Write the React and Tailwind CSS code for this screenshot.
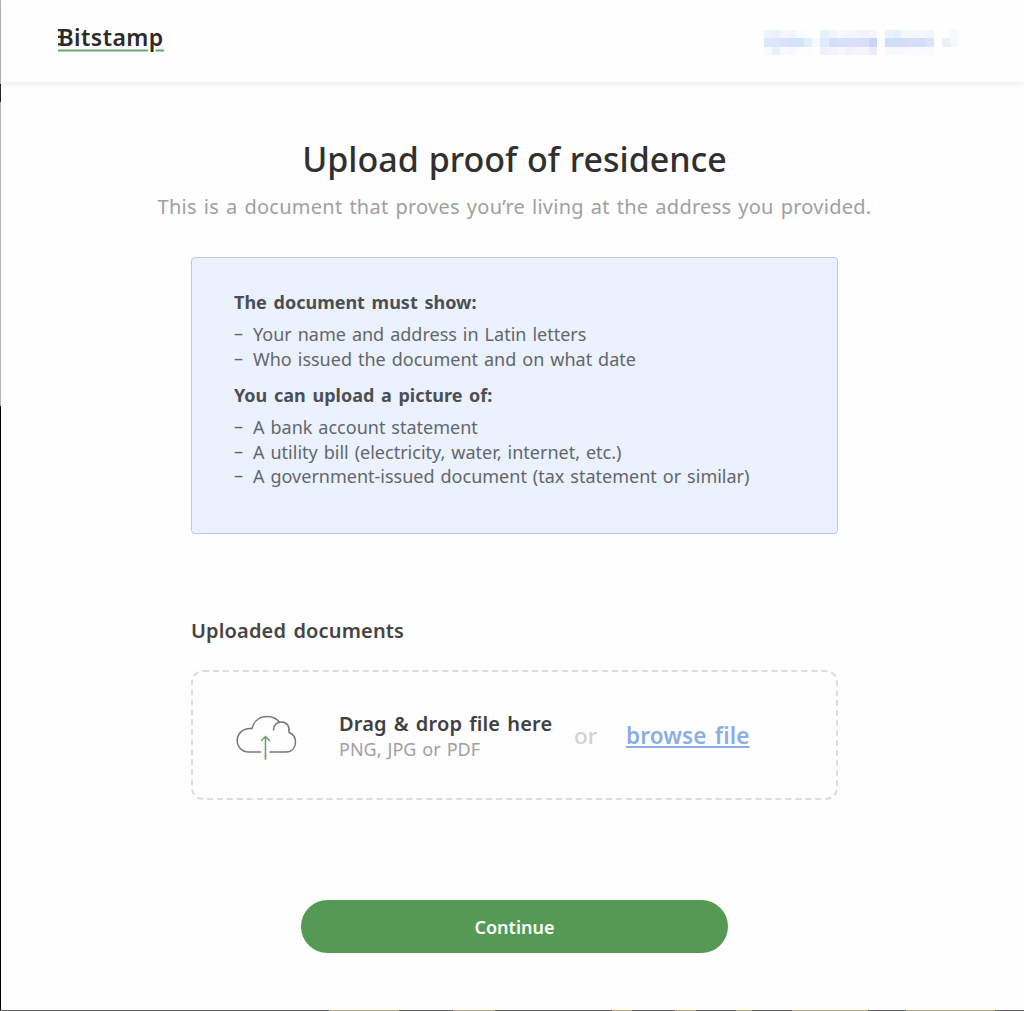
const sections = [
  {
    title: "The document must show:",
    items: [
      "Your name and address in Latin letters",
      "Who issued the document and on what date",
    ],
  },
  {
    title: "You can upload a picture of:",
    items: [
      "A bank account statement",
      "A utility bill (electricity, water, internet, etc.)",
      "A government-issued document (tax statement or similar)",
    ],
  },
];

// Pixelated account name, one colour per 8px cell
const maskedName = [
  ["#eef4fe", "#e9f1fd", "#f4f8fe", "#f1f6fe", "#f8fbff", "#fbfdff", "#fdfefe", "#e9f0fd", "#f0f4fe", "#f6f9ff", "#f4f6fe", "#f3f6fe", "#f0f3fe", "#f3f7fe", "#fefefe", "#eaf2fd", "#e5eefc", "#f5f8fe", "#f4f8fe", "#f4f7fe", "#f1f5fd", "#fefefe", "#fefefe", "#f2f8fe"],
  ["#dce8fb", "#dde6fb", "#d9e2fb", "#d7e1fb", "#d0e5fb", "#e2ecfc", "#f7f9fe", "#dfeafc", "#d5dffb", "#d6e0fb", "#d8e0fb", "#dadffb", "#d5e0fb", "#cdd2f8", "#fafcfe", "#cddff9", "#d1ddfa", "#d3dcfa", "#d7def9", "#d5ddfa", "#dce4fa", "#fefefe", "#e8f0fb", "#f4f9fe"],
  ["#f7faff", "#eaf0fa", "#f9faff", "#f5f8ff", "#fcfdff", "#fafcff", "#fefefe", "#f0f1fe", "#f3f2fe", "#f8f7ff", "#f5f0fe", "#f5f3ff", "#f6f5fe", "#f0eafe", "#fefefe", "#f5f9ff", "#f5faff", "#f7fbff", "#f8fbff", "#f8fbff", "#f7faff", "#fefefe", "#fefefe", "#fefefe"],
];

function Logo() {
  return (
    <svg width="112" height="32" viewBox="0 0 112 32" className="overflow-visible">
      <text
        x="1.5"
        y="21.5"
        letterSpacing="0.45"
        fill="#2b2b2b"
        fontFamily="'Noto Sans', sans-serif"
        fontSize="23"
        fontWeight="600"
      >
        Bitstamp
      </text>
      <path d="M1 6.1h5M1 12.900h5M1 20.400h5" stroke="#2b2b2b" strokeWidth="2.200" />
      <path d="M1 26.500h90M98.500 26.500h8.500" stroke="#65a56c" strokeWidth="2" />
    </svg>
  );
}

function CloudIcon() {
  return (
    <svg
      width="62"
      height="48"
      viewBox="0 0 62 48"
      fill="none"
      strokeWidth="1.5"
      strokeLinecap="round"
      className="mt-[5px]"
    >
      <path
        d="M24.500 38H13C6 38 1.200 33 1.200 26.500C1.200 19.500 7 14.500 14 14.500H16C18 6.500 24 2.500 31 2.500C36.500 2.500 41 4.700 43.500 8.500"
        stroke="#777777"
      />
      <path
        d="M37.500 16C37.500 11 41 8 45.500 8C50.500 8 54 12 53 18.500C57 20 59.500 23.500 59.500 28C59.500 34 56 38 50 38H34"
        stroke="#777777"
      />
      <path d="M29.500 45V22.500M25.500 26.500L29.500 22.500L33.500 26.500" stroke="#64a361" />
      <path d="M29.500 39V45" stroke="#8b918b" />
    </svg>
  );
}

function App() {
  return (
    <div className="flex h-[1011px] w-[1024px] flex-col overflow-hidden bg-[#fefefe] font-['Noto_Sans',sans-serif]">
      <div className="flex h-[1010px]">
        {/* Window edge */}
        <div className="flex w-px shrink-0 flex-col">
          <div className="h-[84px] bg-[#b5b5b5]" />
          <div className="h-[18px] bg-[#252525]" />
          <div className="h-[304px] bg-[#b5b5b5]" />
          <div className="grow bg-black" />
        </div>

        <div className="flex grow flex-col">
          {/* Header */}
          <header className="flex h-[82px] shrink-0 items-start justify-between pl-14 pr-[66px] pt-6 shadow-[0_2px_7px_rgba(0,0,0,0.07)]">
            <Logo />
            <div className="mt-[6px] flex flex-col">
              {maskedName.map((row, i) => (
                <div key={i} className="flex">
                  {row.map((color, j) => (
                    <div
                      key={j}
                      className="h-[8.300px] w-[8.100px]"
                      style={{ backgroundColor: color }}
                    />
                  ))}
                </div>
              ))}
            </div>
          </header>

          <main className="flex flex-col items-center pl-1">
            <h1 className="mt-[53px] whitespace-nowrap text-[34px] font-medium leading-[48px] text-[#303030] [word-spacing:1px]">
              Upload proof of residence
            </h1>
            <p className="mt-2 whitespace-nowrap text-[20px] leading-8 tracking-[0.260px] text-[#a0a0a0] [word-spacing:1.500px]">
              This is a document that proves you’re living at the address you
              provided.
            </p>

            {/* Requirements */}
            <div className="mt-[34px] h-[277px] w-[647px] rounded-[4px] border border-[#b5cbe4] bg-[#ebf2fd] pl-[42px] pt-[31px]">
              {sections.map((section) => (
                <div key={section.title} className="mb-[11px]">
                  <h2 className="mb-[6px] text-[18px] font-bold leading-[27px] text-[#4b4f54] [word-spacing:2px]">
                    {section.title}
                  </h2>
                  <ul className="text-[18px] leading-[24.500px] text-[#62666d] [word-spacing:1.300px]">
                    {section.items.map((item) => (
                      <li key={item} className="flex whitespace-nowrap">
                        <span className="-mt-px w-[19px]">–</span>
                        {item}
                      </li>
                    ))}
                  </ul>
                </div>
              ))}
            </div>

            {/* Upload */}
            <section className="mt-[81px] w-[647px]">
              <h3 className="text-[20px] font-semibold leading-8 tracking-[0.150px] text-[#444444] [word-spacing:2px]">
                Uploaded documents
              </h3>
              <div className="mt-[23px] flex h-[130px] items-center rounded-[12px] border-2 border-dashed border-[#dddddd] pl-[43px]">
                <CloudIcon />
                <div className="ml-[41px] mt-[2px] w-[235px] whitespace-nowrap">
                  <p className="text-[20px] font-semibold leading-[27px] tracking-[0.150px] text-[#404040] [word-spacing:1.700px]">
                    Drag &amp; drop file here
                  </p>
                  <p className="text-[18px] leading-[25px] text-[#a0a0a0] [word-spacing:1.300px]">
                    PNG, JPG or PDF
                  </p>
                </div>
                <span className="mt-px w-[52px] text-[22.500px] font-medium text-[#d2d2d2]">
                  or
                </span>
                <a
                  href="#"
                  className="mt-px whitespace-nowrap text-[22.500px] font-semibold tracking-[0.150px] text-[#8caee5] underline decoration-2 underline-offset-2 [word-spacing:2px]"
                >
                  browse file
                </a>
              </div>
            </section>

            <button className="mt-[100px] h-[53px] w-[427px] rounded-full bg-[#559a54] pt-px text-[18px] font-semibold text-white">
              Continue
            </button>
          </main>
        </div>
      </div>

      {/* Bottom edge */}
      <div className="flex h-px bg-[#606060]">
        <div className="ml-[329px] w-[70px] bg-[#b5a878]" />
        <div className="ml-[54px] w-[42px] bg-[#b5a878]" />
        <div className="ml-[117px] w-[20px] bg-[#b5a878]" />
        <div className="ml-[43px] w-[21px] bg-[#b5a878]" />
        <div className="ml-[40px] w-[16px] bg-[#b5a878]" />
        <div className="ml-[40px] w-[76px] bg-[#b5a878]" />
        <div className="ml-[38px] w-[89px] bg-[#b5a878]" />
      </div>
    </div>
  );
}

export default App;
